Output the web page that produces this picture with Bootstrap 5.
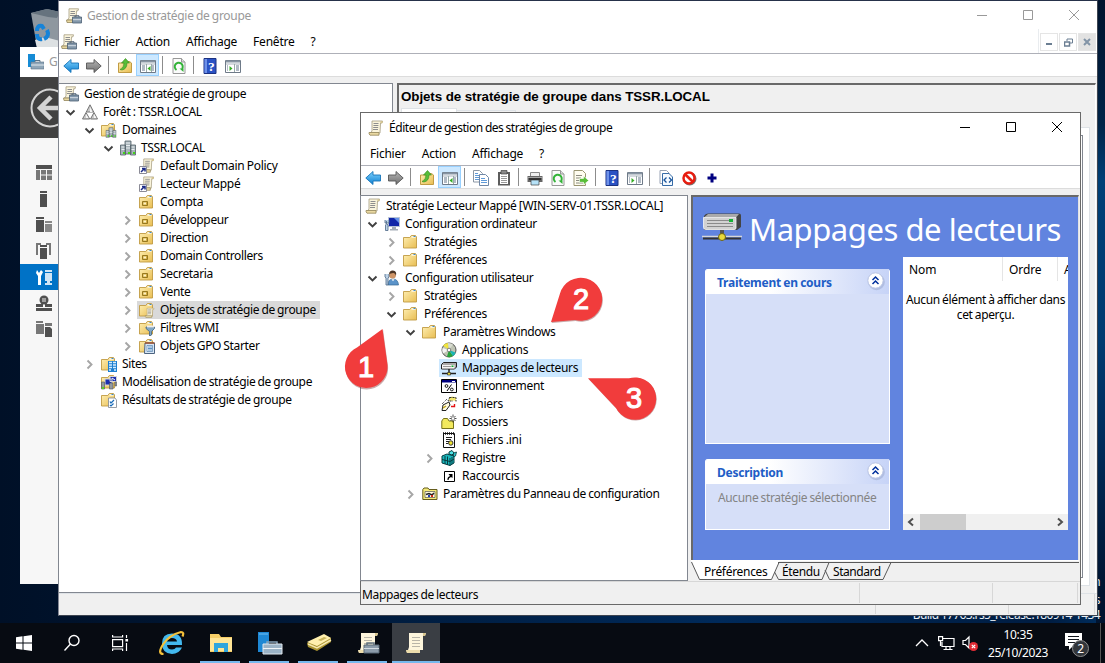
<!DOCTYPE html>
<html lang="fr">
<head>
<meta charset="utf-8">
<meta name="viewport" content="width=device-width, initial-scale=1">
<title>Éditeur de gestion des stratégies de groupe</title>
<link href="https://cdn.jsdelivr.net/npm/bootstrap@5.3.0/dist/css/bootstrap.min.css" rel="stylesheet">
<style>
html,body{height:100%}
body{font:12px/18px "Noto Sans","Open Sans",sans-serif;letter-spacing:-.36px;word-spacing:-.5px;color:#000;background:#001631}
svg{display:block;flex:none}
.desktop{width:1105px;height:663px;background:linear-gradient(90deg,#001027 0,#001a3a 30%,#002a5a 65%,#001d42 95%,#002f60)}
.edge-glow{right:0;top:0;width:9px;height:623px;background:linear-gradient(#00132d,#002448 20%,#004077 29%,#003a70 55%,#002c5c 70%,#001430 95%)}
.win{position:absolute;background:#fff;border:1px solid #696969;display:flex;flex-direction:column}
.w-server{left:20px;top:47px;width:39px;height:537px;border:0;background:#f7f7f7;overflow:hidden}
.w-gpm{left:58px;top:0;width:1040px;height:616px;border-color:#26324a #3d4450 #3d4450 #858894}
.w-gpe{left:360px;top:112px;width:721px;height:493px}
.titlebar{height:28px;padding-top:2px}
.w-gpm .titlebar{color:#999}
.caps{gap:34px;padding-bottom:2px}
.menubar{gap:16px;height:25px;border-bottom:1px solid #aeb0b8;letter-spacing:-.22px}
.menubar>span{padding-top:2px}
.tools{height:23px;border-bottom:1px solid #dcdcdc}
.tb{width:23px;height:22px;display:flex;align-items:center;justify-content:center;padding-top:2px}
.tb.on{background:#cce8ff;border:1px solid #99d1ff}
.sp{width:8px;height:18px;background:linear-gradient(#8c8c8c,#8c8c8c) 3px 0/1px 100% no-repeat}
.face{background:#f0f0f0}
.tree{background:#fff;border:1px solid #828790;padding-top:1px}
.node{display:flex;align-items:center;height:18px;white-space:nowrap}
.l0{padding-left:2px}.l1{padding-left:5px}.l2{padding-left:24px}.l3{padding-left:43px}.l4{padding-left:62px}
.tw{width:12px;margin-right:4px;flex:none}
.pick{display:flex;align-items:center;height:18px;padding:0 4px 0 2px;gap:5px}
.pick.grey{background:#d9d9d9}.pick.blue{background:#cce8ff}
.mdi{width:18px;height:18px;border:1px solid #e5e5e5;display:flex;align-items:center;justify-content:center}
.gp-head{font:bold 13.4px/18px "Liberation Sans",Arial,sans-serif;letter-spacing:-.1px;word-spacing:0}
.blueview{background:#6184df;border:2px solid #696969;border-right:1px solid #e3e3e3;border-bottom:0}
.bigname{font:31px/40px "Noto Sans",sans-serif;color:#fff;white-space:nowrap;letter-spacing:-.45px;word-spacing:0;padding-top:3px}
.pn{background:#d6dff8;border:1px solid #fff;border-top:0;border-radius:3px 3px 0 0;overflow:hidden}
.pn-h{height:25px;margin:0 -1px;padding:0 4px 2px 12px;background:linear-gradient(90deg,#fff 35%,#c6d3f7);color:#215dc6;font-weight:700;letter-spacing:-.25px}
.pn-b{color:#848484;padding:5px 12px;white-space:nowrap}
.col-h{height:24px;line-height:25px;letter-spacing:-.1px}
.col-h>div{border-right:1px solid #e5e5e5;padding-left:6px;flex:none}
.hbar{height:16px;background:#f0f0f0}
.thumb{width:46px;height:16px;background:#cdcdcd;margin-left:2px}
.status i{border-right:1px solid #d7d7d7;height:20px;display:block}
.srv-ico{height:26px;display:flex;align-items:center;padding-left:16px}
.taskbar{left:0;top:623px;width:1105px;height:40px;background:#070b12;color:#fff}
.tk{width:49px;height:40px;display:flex;align-items:center;justify-content:center;position:relative}
.tk.run::after{content:"";position:absolute;left:4px;right:5px;bottom:0;height:2px;background:#76b9ed}
.tk.act{background:#3a3e44;width:48px}.tk.act::after{left:0;right:0}
.wm{right:5px;color:#e8eef5;white-space:nowrap;letter-spacing:-.6px}
.clock{line-height:18px;text-align:center;width:70px}
.callouts{left:0;top:0;pointer-events:none}
.callouts text{font:29px "Liberation Sans",sans-serif;fill:#fff;stroke:#fff;stroke-width:1.1;text-anchor:middle;letter-spacing:0}
</style>
<script src="https://cdn.jsdelivr.net/npm/bootstrap@5.3.0/dist/js/bootstrap.bundle.min.js"></script>
</head>
<body class="m-0 overflow-hidden">
<svg width="0" height="0" class="position-absolute">
<defs>
<linearGradient id="gf" x2="1" y2="1"><stop stop-color="#fff0b4"/><stop offset="1" stop-color="#e8bd52"/></linearGradient>
<linearGradient id="gb" x2="0" y2="1"><stop stop-color="#7fd3ff"/><stop offset="1" stop-color="#0d7fd0"/></linearGradient>
<linearGradient id="gg" x2="0" y2="1"><stop stop-color="#b5b5b5"/><stop offset="1" stop-color="#6f6f6f"/></linearGradient>
<symbol id="right" viewBox="0 0 12 18"><path d="M4.500 5.500l4 4-4 4" fill="none" stroke="#a6a6a6" stroke-width="1.900"/></symbol>
<symbol id="down" viewBox="0 0 12 18"><path d="M2.500 7.500l4 4 4-4" fill="none" stroke="#404040" stroke-width="1.900"/></symbol>
<symbol id="scroll" viewBox="0 0 16 16"><path d="M4 1h10.500l-.5 2h-1.500L12 13H2.500L4 11z" fill="#fbf5dc" stroke="#a59c80" stroke-width=".8"/><path d="M12.500 1.200h2v2h-2z" fill="#d5c48c"/><path d="M1 12.500h10v2.700H2Q.7 14 1 12.500z" fill="#ead9a2" stroke="#94865a" stroke-width=".8"/><path d="M5.500 3.500h5M5.400 5.500h5M5.200 7.500h5M5 9.500h5" stroke="#8e8e8e"/></symbol>
<symbol id="scrolltool" viewBox="0 0 16 16"><path d="M3 .8h9.500l-.5 2h-1.500L10 12H1.500L3 10z" fill="#fbf5dc" stroke="#a59c80" stroke-width=".8"/><path d="M.5 12h8v2.500h-7.500z" fill="#ead9a2" stroke="#94865a" stroke-width=".8"/><path d="M4.500 3.500H9M4.400 5.500H9M4 7.500h5" stroke="#8e8e8e"/><path d="M9 9V7.800h4V9" fill="none" stroke="#47586b"/><path d="M6.500 9h9v6h-9z" fill="#8498ab" stroke="#4d6073" stroke-width=".8"/><path d="M7 11.700h8" stroke="#d5dde5"/></symbol>
<symbol id="bigscroll" viewBox="0 0 24 24"><path d="M5 2h17l-1 3h-2v14H4l1-3z" fill="#fdf5dc"/><path d="M19 2h3l-1 3h-2z" fill="#d8c68e"/><path d="M2 19h14v3H3q-1-1-1-3z" fill="#ecdcab"/><path d="M8 6.500h8M8 9.500h8M8 12.500h8M8 15.500h8" stroke="#b9b5a8"/></symbol>
<symbol id="forest" viewBox="0 0 16 16"><path d="M8 .8L4.300 8h7.400zM4 8.500L.5 15h7.200zM12 8.500L8.500 15h7z" fill="#ccc" stroke="#747474"/><path d="M8 3v5h2.500zM4 10v4h2.500zM12 10v4h2.500z" fill="#f6f6f6"/></symbol>
<symbol id="folder" viewBox="1 0 16 16"><path d="M1.500 3.500h6.300l1.500-2h4.200l1 1.500v11h-13z" fill="url(#gf)" stroke="#c19b43" stroke-width=".9"/><path d="M9.500 3h4" stroke="#fff" stroke-width="1.200"/><path d="M11.500 2.500h2" stroke="#3a8bd2"/></symbol>
<symbol id="blocks" viewBox="0 0 16 16"><path d="M5 1h6v13H5zM.5 5h5v10h-5zM10.500 5h5v10h-5z" fill="#a8b4ba" stroke="#526067" stroke-width=".8"/><path d="M6 3h4M6 5.500h4M6 8h4M1.500 7h3M1.500 9.500h3M11.500 7h3M11.500 9.500h3" stroke="#e9eef0"/><path d="M3 12h2v2H3zM8 12h2v2H8zM13 12h2v2h-2z" fill="#43d318"/></symbol>
<symbol id="domains" viewBox="0 0 16 16"><use href="#folder" width="16" height="16"/><use href="#blocks" x="4.500" y="5" width="11" height="11"/></symbol>
<symbol id="link" viewBox="0 0 16 16"><use href="#scroll" x="1" width="15" height="15"/><path d="M.5 8.500h7v7h-7z" fill="#fff" stroke="#8b8b96"/><path d="M2 14l3-3M3 10.500h3v3" stroke="#1b2a86" stroke-width="1.500" fill="none"/></symbol>
<symbol id="ou" viewBox="0 0 16 16"><use href="#folder" width="16" height="16"/><path d="M3.500 7.500h5v4h-5z" fill="#d6ae43" stroke="#96781f"/><path d="M4.500 8.500h2.500v2H4.500z" fill="#fdf3c5"/></symbol>
<symbol id="fscroll" viewBox="0 0 16 16"><use href="#folder" width="16" height="16"/><use href="#scroll" x="5.500" y="5.500" width="10.500" height="10.500"/></symbol>
<symbol id="ffilter" viewBox="0 0 16 16"><use href="#folder" width="16" height="16"/><path d="M7 7h8.500v1.500L12.500 11.500V15l-2 1v-4.500L7 8.500z" fill="#7fa6c6" stroke="#41637f" stroke-width=".8"/><path d="M8 6.500h7" stroke="#eee" stroke-width="2"/></symbol>
<symbol id="fstart" viewBox="0 0 16 16"><use href="#folder" width="16" height="16"/><path d="M6 5h9.500v10.500H5.500z" fill="#d9e7f6" stroke="#4c6480"/><path d="M6 5h9.500" stroke="#a0522d" stroke-width="1.500"/><path d="M8 7.500h5.500v6H8z" fill="#fff" stroke="#527fae" stroke-width=".7"/><path d="M9 9h4M9 10.500h4M9 12h4" stroke="#3176b8" stroke-width=".8"/></symbol>
<symbol id="sites" viewBox="0 0 16 16"><use href="#folder" width="16" height="16"/><path d="M7 5h9v11H7z" fill="#1d7fd0"/><path d="M8 6.500h3M12 6.500h3M8 9h3M12 9h3M8 11.500h3M12 11.500h3M8 14h2M13 14h2" stroke="#d6eeff" stroke-width="1.500"/></symbol>
<symbol id="model" viewBox="0 0 16 16"><use href="#folder" width="16" height="16"/><path d="M4 5h7v6H4zM9 2.500h6.500v5H9z" fill="#1b2eb0" stroke="#d5d5d5"/><path d="M.5 8h3v7h-3zM8.500 9h3.500v6H8.500zM14 8h1.500v4H14z" fill="#9299a0" stroke="#4d535a" stroke-width=".6"/><path d="M1 13h2v2H1z" fill="#58d71d"/><path d="M11 4l3 2" stroke="#fff"/></symbol>
<symbol id="result" viewBox="0 0 16 16"><use href="#folder" width="16" height="16"/><path d="M7.500 6h6.500l1.500 2v7.500h-8z" fill="#fff" stroke="#7d8590" stroke-width=".8"/><path d="M9 9.500l1 1.500 3-3M9 13l1 1 2.500-2.500" fill="none" stroke="#196bb8" stroke-width="1.200"/></symbol>
<symbol id="back" viewBox="0 0 16 16"><path d="M.8 8L8 1.500V5h7.500v6H8v3.500z" fill="url(#gb)" stroke="#1774b8" stroke-width=".9"/></symbol>
<symbol id="fwd" viewBox="0 0 16 16"><path d="M15.200 8L8 1.500V5H.5v6H8v3.500z" fill="url(#gg)" stroke="#555" stroke-width=".9"/></symbol>
<symbol id="up" viewBox="0 0 16 16"><path d="M1.500 5h6l1-1.500h4L14.500 5v9.500h-13z" fill="url(#gf)" stroke="#c19b43"/><path d="M3 11.500Q7 10 7 5H4.500l4-4.500 4 4.500H10Q10 11 5 12z" fill="#58bd38" stroke="#34891d" stroke-width=".6"/></symbol>
<symbol id="pane" viewBox="0 0 16 16"><path d="M.5 2.500h15v12H.5z" fill="#fff" stroke="#6e7a88"/><path d="M1 3.500h14" stroke="#8794a2" stroke-width="2"/><path d="M1 6h14" stroke="#a9b3bd"/><path d="M2 8h3M2 10h3M2 12h3M12 8h2M12 10h2M12 12h2" stroke="#64778b"/><path d="M6.500 6v8M11.500 6v8" stroke="#9aa"/><path d="M10.500 8v5L7.500 10.500z" fill="#35ad24"/></symbol>
<symbol id="console" viewBox="0 0 16 16"><path d="M.5 2.500h15v12H.5z" fill="#fff" stroke="#6e7a88"/><path d="M1 3.500h14" stroke="#8794a2" stroke-width="2"/><path d="M1 6h14" stroke="#a9b3bd"/><path d="M11 8h3M11 10h3M11 12h3M2 8h1M2 10h1M2 12h1" stroke="#64778b"/><path d="M9.500 6v8" stroke="#9aa"/><path d="M4.500 8v5l3-2.500z" fill="#35ad24"/></symbol>
<symbol id="refresh" viewBox="0 0 16 16"><path d="M2 .5h8.500L14 4v11.500H2z" fill="#fbfbfb" stroke="#989898"/><path d="M10.500.5V4H14" fill="#ddd" stroke="#989898"/><path d="M5.500 12A4 4 0 1 1 11 11" fill="none" stroke="#33b338" stroke-width="2"/><path d="M8.500 10.500h4v3.500z" fill="#33b338"/></symbol>
<symbol id="help" viewBox="0 0 16 16"><path d="M2 .5h12v15H2z" fill="#2a52c4" stroke="#1b3181"/><path d="M2.500 1H5v14H2.500z" fill="#6e91e8"/><text x="9.300" y="13" font-size="13.500" font-weight="700" fill="#fff" text-anchor="middle" font-family="Liberation Serif,serif">?</text></symbol>
<symbol id="copy" viewBox="0 0 16 16"><path d="M.5.500h6l3 3v8.500h-9z" fill="#fff" stroke="#8b97a5"/><path d="M6.500 4.500h6l3 3v8h-9z" fill="#fff" stroke="#6f87a6"/><path d="M2 3.500h3M2 5.500h4M2 7.500h4M2 9.500h4M8 8.500h4M8 10.500h6M8 12.500h6" stroke="#5f9ad8"/></symbol>
<symbol id="clip" viewBox="0 0 16 16"><path d="M2 2h12v13.500H2z" fill="#5c5c5c"/><path d="M4 4h8v10H4z" fill="#fff"/><path d="M5 .5h6v3.500H5z" fill="#888" stroke="#444" stroke-width=".7"/><path d="M5 6.500h6M5 8.500h6M5 10.500h6M5 12.500h6" stroke="#999"/></symbol>
<symbol id="print" viewBox="0 0 16 16"><path d="M3.500 2.500h9v4h-9z" fill="#eee" stroke="#888"/><path d="M.5 6h15v6H.5z" fill="#666"/><path d="M1 7.500h14" stroke="#a4a4a4"/><path d="M4 10h8v5H4z" fill="#b6e2f8" stroke="#444" stroke-width=".7"/><path d="M2 9h12" stroke="#222" stroke-width="1.500"/></symbol>
<symbol id="export" viewBox="0 0 16 16"><path d="M1 .5h8.500L12.500 3.500v12H1z" fill="#fffdf0" stroke="#999470"/><path d="M3 5.500h6M3 8h5M3 10.500h4M3 13h7" stroke="#8b8b80"/><path d="M6.500 8.500h4V6l5.200 4.500-5.200 4.300v-2.500h-4z" fill="#58bd38" stroke="#fff" stroke-width=".6"/></symbol>
<symbol id="code" viewBox="0 0 16 16"><path d="M2 .5h6.500l3 3v10H2z" fill="#fff" stroke="#98a3b4"/><path d="M4.500 3.500h6.500l3.500 3.500v8.500h-10z" fill="#f4faff" stroke="#376ba6"/><path d="M8.500 7.500L6 10l2.500 2.500M11 7.500l2.500 2.500-2.500 2.500" fill="none" stroke="#17529a" stroke-width="1.300"/></symbol>
<symbol id="stop" viewBox="0 0 16 16"><circle cx="8.700" cy="8.700" r="5.800" fill="none" stroke="#777" stroke-width="2"/><circle cx="8" cy="8" r="5.500" fill="#fff" stroke="#e81d10" stroke-width="2.500"/><path d="M4.300 4.500l7.500 7.200" stroke="#e81d10" stroke-width="2.700"/></symbol>
<symbol id="plus" viewBox="0 0 16 16"><path d="M8 3.500v9M3.500 8h9" stroke="#000080" stroke-width="3"/></symbol>
<symbol id="pc" viewBox="0 0 16 16"><path d="M4.500 1.500h11v9h-11z" fill="#1126a8" stroke="#b7c2d5"/><path d="M10 2h5v5z" fill="#6492e9"/><path d="M8 11h4v2h2v1.500H6V13h2z" fill="#a5aeb8"/><path d="M2.500 5v3l-1 1v5.500h2.500V9l-1-1M1 4v3h4V4" fill="#bcd1e5" stroke="#4c6787" stroke-width=".8"/></symbol>
<symbol id="user" viewBox="0 0 16 16"><path d="M4 15q0-6 5-6t5.500 6z" fill="#5b93c9" stroke="#356894" stroke-width=".7"/><circle cx="8.500" cy="5" r="3.500" fill="#cf9567"/><path d="M5 4q.5-3.800 4-3.500 4 .5 3 5-1-3-3-2.500T5 4z" fill="#4b3526"/><path d="M7.500 9.200l1.500 2 1.500-2z" fill="#fff"/><path d="M1 4v3l1 1v7h2V8l1-1V4" fill="#bcd1e5" stroke="#4c6787" stroke-width=".8"/></symbol>
<symbol id="disc" viewBox="0 0 16 16"><circle cx="8" cy="8" r="7" fill="#bfc4b4" stroke="#555"/><path d="M8 8L2 3.500Q4 1 7 1z" fill="#f0e43e"/><path d="M8 8L7 1q3-.2 5 1.500z" fill="#d8dcd0"/><path d="M8 8l4 6q-3 2-6 .5z" fill="#28a23b"/><path d="M8 8l6.500 2.500q-.7 2.500-2.500 3.500z" fill="#19b5b5"/><path d="M8 8L1.500 6Q.8 9 2 11.500z" fill="#f4f4f4"/><circle cx="8" cy="8" r="1.800" fill="#fff" stroke="#555" stroke-width=".7"/></symbol>
<symbol id="drive" viewBox="0 0 40 28"><path d="M2 4q0-3 4-3.500h31q2 0 2 2V14l-4 3H2z" fill="#444"/><path d="M2 4.500L6 1h31l-3 3.500z" fill="#aaa"/><path d="M1.500 4.500H34V15q0 1.500-2 1.500H4q-2.500 0-2.500-2z" fill="#d2d2d2" stroke="#f7f7f7" stroke-width=".8"/><path d="M5 7.500h26M5 10.500h26M5 13.500h26" stroke="#8b8b8b"/><path d="M27 6h4v3h-4z" fill="#16b335"/><path d="M18 17h4v6h-4z" fill="#555"/><path d="M0 23.500h40" stroke="#d7d7d7" stroke-width="1.500"/><path d="M1 25.500h38" stroke="#333" stroke-width="2"/><circle cx="20" cy="24" r="3.500" fill="#e7d83a" stroke="#6b6212"/></symbol>
<symbol id="sdrive" viewBox="0 0 16 16"><path d="M.5 4.500l2-2h13v4.500l-2 2H.5z" fill="#aaa" stroke="#222"/><path d="M1 5h12.500v3.500H1z" fill="#f5f5f5"/><path d="M2 6.500h8" stroke="#999"/><path d="M10.500 5.500h2v1.500h-2z" fill="#12ad2d"/><path d="M8 9v4M1 13.500h14" stroke="#222" stroke-width="1.500"/><path d="M6.500 12.500h3V15h-3z" fill="#e9da35" stroke="#333" stroke-width=".7"/></symbol>
<symbol id="env" viewBox="0 0 16 16"><path d="M.5 1.500h15v13H.5z" fill="#fff" stroke="#000"/><path d="M1 2h14v2.500H1z" fill="#000080"/><path d="M11 3.500h3" stroke="#fff"/><path d="M10.500 6.500l-4.500 6.500" stroke="#000"/><circle cx="5.500" cy="8" r="1.400" fill="none" stroke="#000" stroke-width=".9"/><circle cx="10.800" cy="11.500" r="1.400" fill="none" stroke="#000" stroke-width=".9"/></symbol>
<symbol id="files" viewBox="0 0 16 16"><path d="M8 1.500l3-1 4 1v3.500l-2-.5-5 .5z" fill="#f1e66b"/><path d="M8.500 1.500h6.500v4M9 1l-2 4h5" fill="none" stroke="#333" stroke-dasharray="2 1"/><path d="M2 9l6-3 1 3-4 5.500H1z" fill="#fffce0" stroke="#222"/><path d="M1 8l5-5" stroke="#222" stroke-dasharray="1 1"/><path d="M2 12l3-2" stroke="#bea01a" stroke-width="1.500"/><path d="M10 10.500h3.500V8" fill="none" stroke="#e51212" stroke-width="1.400"/></symbol>
<symbol id="newdir" viewBox="0 0 16 16"><path d="M.8 7L2.500 4.500h4L8 7h4.500v7.500H.8z" fill="#f2e95d" stroke="#77731b"/><path d="M12 .5v8M8.500 4.500h7M9.500 2l5 5M14.500 2l-5 5" stroke="#222" stroke-width=".8"/><circle cx="12" cy="4.500" r="1.300" fill="#fff"/></symbol>
<symbol id="ini" viewBox="0 0 16 16"><path d="M2.500 1.500h11v14h-11z" fill="#fff" stroke="#111"/><path d="M2 1.500h12" stroke="#111" stroke-width="2.500" stroke-dasharray="1 1"/><path d="M5 5.500h6M5 7.500h5M5 9.500h3M5 11.500h2" stroke="#222"/><circle cx="9.800" cy="11" r="2.200" fill="#f2e532" stroke="#333"/></symbol>
<symbol id="reg" viewBox="0 0 16 16"><path d="M1 6l5-2 7 2v7l-4 2.500L1 13z" fill="#19b8bd" stroke="#063c40"/><path d="M1 9.500l8 2 4-2.500M4 6v8M6.500 6.500v8.500M9 8v7.500M11 7v7" stroke="#063c40" fill="none"/><path d="M8 2l3-1.500L13 3l-2 2-3-1z" fill="#4fe3e6" stroke="#063c40"/><path d="M12.500 3l3-1-1 4-2 1z" fill="#2ac4c9" stroke="#063c40" stroke-width=".8"/></symbol>
<symbol id="short" viewBox="0 0 16 16"><path d="M3.500 3.500h10v10h-10z" fill="#fff" stroke="#000"/><path d="M6.500 12Q6 9 9 8L7.500 6h4v4L10 9Q7.500 10 7.500 12z" fill="#000"/></symbol>
<symbol id="panel" viewBox="0 0 16 16"><path d="M.8 13.500v-10l1.200-1.500h4l1 1.500h8v10z" fill="#f6eb78" stroke="#655c1d"/><path d="M3 5.500h10v6H3z" fill="#fffbe0" stroke="#555" stroke-width=".7"/><path d="M4 8.500l3-1 3 1.500 2-2" stroke="#222" fill="none" stroke-width="1.500"/><path d="M6 9h2v2H6z" fill="#2641b5"/><path d="M9 9h2v2H9z" fill="#d42b19"/></symbol>
<symbol id="chev2" viewBox="0 0 20 20"><circle cx="10.500" cy="11" r="8.300" fill="#9ba9cf" opacity=".55"/><circle cx="9.500" cy="9.500" r="7.700" fill="#fff" stroke="#b8c3e3"/><path d="M6.500 9l3-3 3 3M6.500 13l3-3 3 3" fill="none" stroke="#00309c" stroke-width="1.500"/></symbol>
</defs>
</svg>

<main class="desktop position-relative overflow-hidden">
  <div class="edge-glow position-absolute"></div>
  <svg class="position-absolute" style="left:30px;top:8px" width="30" height="40"><path d="M1 5L17 1l13 3v35H7z" fill="#8e979f"/><path d="M1 5L17 1l13 3-3 6-9-1z" fill="#66737e"/><path d="M5 32l10-3 15 4v7H7z" fill="#dde1e3"/><path d="M7 23q0-6 5-5l2 3M17 22q3 6-3 9M12 31q-5 1-5-5" fill="none" stroke="#1683d8" stroke-width="4"/></svg>
  <div class="wm position-absolute" style="top:573px">n</div>
  <div class="wm position-absolute" style="top:591px">s</div>
  <div class="wm position-absolute" style="top:606px">Build 17763.rs5_release.180914-1434</div>

  <section class="win w-server">
    <div class="bg-white d-flex align-items-center ps-2" style="height:30px;color:#999;gap:5px">
      <svg width="16" height="16"><path d="M0 0h7v13H0z" fill="#168bd5"/><path d="M7 8V6.500h5V8" stroke="#5b7488" fill="none"/><path d="M3 8h13v7H3z" fill="#8fa6b8" stroke="#5b7488" stroke-width=".6"/><path d="M3 11h13" stroke="#e3ebf0"/></svg><span>G</span></div>
    <div style="height:61px;background:#414141"><svg width="38" height="61"><circle cx="30" cy="31" r="18.500" fill="none" stroke="#d4d4d4" stroke-width="2"/><path d="M38 31H20M31 20L20 31l11 11" fill="none" stroke="#d4d4d4" stroke-width="4.500"/></svg></div>
    <div style="height:22px"></div>
    <div class="srv-ico"><svg width="16" height="16" fill="#777"><path d="M0 0h16v4H0z" fill="#505050"/><path d="M0 5h4v10H0zM5 5h5v4.500H5zM11 5h5v4.500h-5zM5 10.500h5V15H5zM11 10.500h5V15h-5z"/></svg></div>
    <div class="srv-ico"><svg width="16" height="16" fill="#505050"><path d="M4 0h7v2H4zM4 3h7v13H4z"/></svg></div>
    <div class="srv-ico"><svg width="16" height="16" fill="#505050"><path d="M0 0h8v2H0zM0 3h8v12H0z"/><path d="M9 4h7v2H9zM9 7h7v8H9z" fill="#888"/></svg></div>
    <div class="srv-ico"><svg width="16" height="16" fill="#505050"><path d="M0 0h5v2H2v10H0zM10 0h5v12h-2V2h-3z" fill="#777"/><path d="M4 2h7v2H4zM4 5h7v11H4z"/></svg></div>
    <div class="srv-ico" style="background:#0072c6"><svg width="16" height="16" fill="#fff"><path d="M1 1l2 3 2-3 2 2-2 4v9H2V7L0 4z"/><path d="M9 1h7v2H9zM9 4h7v8H9zM11 12h3v2h2v2H9v-2h2z" opacity=".82"/></svg></div>
    <div class="srv-ico"><svg width="16" height="16" fill="#505050"><circle cx="8" cy="5" r="4.500"/><path d="M6 4h4M6 6h4" stroke="#eee"/><path d="M0 9h7v3H0zM9 9h7v3H9zM0 13h16v3H0z"/></svg></div>
    <div class="srv-ico"><svg width="16" height="16" fill="#777"><path d="M0 0h7v2H0zM0 3h8v10H0zM9 2h7v3H9z"/><path d="M9 6h5l2 2v8H9z" fill="#505050"/></svg></div>
  </section>

  <section class="win w-gpm">
    <header class="titlebar d-flex align-items-center" style="padding-left:7px"><svg width="16" height="16"><use href="#scrolltool"/></svg><span style="margin-left:5px;letter-spacing:-.3px">Gestion de stratégie de groupe</span>
      <div class="caps d-flex ms-auto" style="margin-right:17px"><svg width="12" height="12" stroke="#999"><path d="M1 6.500h10"/></svg><svg width="12" height="12" stroke="#999" fill="none"><path d="M1.500 1.500h9v9h-9z"/></svg><svg width="12" height="12" stroke="#999"><path d="M1 1l10 10M11 1L1 11"/></svg></div></header>
    <nav class="menubar d-flex align-items-center" style="padding-left:2px"><span class="d-flex align-items-center"><svg width="16" height="16"><use href="#scrolltool"/></svg><span style="margin-left:7px">Fichier</span></span><span>Action</span><span>Affichage</span><span>Fenêtre</span><span>?</span>
      <div class="d-flex ms-auto h-100 align-items-center border-start border-secondary-subtle" style="gap:1px;padding:2px 1px 0"><span class="mdi"><svg width="8" height="8"><path d="M1 6h6" stroke="#6b7e92" stroke-width="2"/></svg></span><span class="mdi"><svg width="9" height="9" fill="none" stroke="#6b7e92"><path d="M3 3V1h5.500v4H6"/><path d="M.5 4h5v4h-5z" stroke-width="1.500"/></svg></span><span class="mdi" style="background:#e2e2e2"><svg width="8" height="8"><path d="M1 1l6 6M7 1L1 7" stroke="#8294a7" stroke-width="2"/></svg></span></div></nav>
    <div class="tools d-flex align-items-center"><span class="tb"><svg width="16" height="16"><use href="#back"/></svg></span><span class="tb"><svg width="16" height="16"><use href="#fwd"/></svg></span><span class="sp"></span><span class="tb"><svg width="16" height="16"><use href="#up"/></svg></span><span class="tb on"><svg width="16" height="16"><use href="#pane"/></svg></span><span class="sp"></span><span class="tb"><svg width="16" height="16"><use href="#refresh"/></svg></span><span class="sp"></span><span class="tb"><svg width="16" height="16"><use href="#help"/></svg></span><span class="tb"><svg width="16" height="16"><use href="#console"/></svg></span></div>
    <div class="face d-flex flex-grow-1" style="padding:6px 1px 0 0">
      <div class="tree" style="width:335px;height:510px;margin-left:-1px">
        <div class="node l0"><span class="pick"><svg width="16" height="16"><use href="#scrolltool"/></svg>Gestion de stratégie de groupe</span></div>
        <div class="node l1"><svg class="tw" height="18"><use href="#down"/></svg><span class="pick"><svg width="16" height="16"><use href="#forest"/></svg>Forêt : TSSR.LOCAL</span></div>
        <div class="node l2"><svg class="tw" height="18"><use href="#down"/></svg><span class="pick"><svg width="16" height="16"><use href="#domains"/></svg>Domaines</span></div>
        <div class="node l3"><svg class="tw" height="18"><use href="#down"/></svg><span class="pick"><svg width="16" height="16"><use href="#blocks"/></svg>TSSR.LOCAL</span></div>
        <div class="node l4"><span class="tw"></span><span class="pick" style="letter-spacing:-.28px"><svg width="16" height="16"><use href="#link"/></svg>Default Domain Policy</span></div>
        <div class="node l4"><span class="tw"></span><span class="pick" style="letter-spacing:-.28px"><svg width="16" height="16"><use href="#link"/></svg>Lecteur Mappé</span></div>
        <div class="node l4"><span class="tw"></span><span class="pick" style="letter-spacing:-.22px"><svg width="16" height="16"><use href="#ou"/></svg>Compta</span></div>
        <div class="node l4"><svg class="tw" height="18"><use href="#right"/></svg><span class="pick"><svg width="16" height="16"><use href="#ou"/></svg>Développeur</span></div>
        <div class="node l4"><svg class="tw" height="18"><use href="#right"/></svg><span class="pick"><svg width="16" height="16"><use href="#ou"/></svg>Direction</span></div>
        <div class="node l4"><svg class="tw" height="18"><use href="#right"/></svg><span class="pick"><svg width="16" height="16"><use href="#ou"/></svg>Domain Controllers</span></div>
        <div class="node l4"><svg class="tw" height="18"><use href="#right"/></svg><span class="pick"><svg width="16" height="16"><use href="#ou"/></svg>Secretaria</span></div>
        <div class="node l4"><svg class="tw" height="18"><use href="#right"/></svg><span class="pick"><svg width="16" height="16"><use href="#ou"/></svg>Vente</span></div>
        <div class="node l4"><svg class="tw" height="18"><use href="#right"/></svg><span class="pick grey"><svg width="16" height="16"><use href="#fscroll"/></svg>Objets de stratégie de groupe</span></div>
        <div class="node l4"><svg class="tw" height="18"><use href="#right"/></svg><span class="pick"><svg width="16" height="16"><use href="#ffilter"/></svg>Filtres WMI</span></div>
        <div class="node l4"><svg class="tw" height="18"><use href="#right"/></svg><span class="pick"><svg width="16" height="16"><use href="#fstart"/></svg>Objets GPO Starter</span></div>
        <div class="node l2"><svg class="tw" height="18"><use href="#right"/></svg><span class="pick"><svg width="16" height="16"><use href="#sites"/></svg>Sites</span></div>
        <div class="node l2"><span class="tw"></span><span class="pick"><svg width="16" height="16"><use href="#model"/></svg>Modélisation de stratégie de groupe</span></div>
        <div class="node l2"><span class="tw"></span><span class="pick"><svg width="16" height="16"><use href="#result"/></svg>Résultats de stratégie de groupe</span></div>
      </div>
      <div class="flex-grow-1" style="margin-left:4px;height:510px;border:2px solid #696969;border-width:2px 1px 0 2px;border-right-color:#fff;padding:3px 5px 0 2px">
        <div class="gp-head">Objets de stratégie de groupe dans TSSR.LOCAL</div>
        <div class="d-flex" style="height:19px;margin-top:2px"><div class="bg-white border border-bottom-0" style="width:56px"></div><div class="border border-start-0 border-bottom-0" style="width:59px;margin-top:2px"></div></div>
        <div class="bg-white border" style="height:459px;padding:7px 6px 7px 2px"><div class="h-100" style="border:1px solid #828790"></div></div>
      </div>
    </div>
    <footer class="status face d-flex justify-content-end border-top" style="height:22px"><i></i><i style="width:133px"></i><i style="width:86px;margin-right:2px"></i></footer>
  </section>

  <section class="win w-gpe">
    <header class="titlebar d-flex align-items-center" style="padding-left:7px"><svg width="16" height="16"><use href="#scroll"/></svg><span style="margin-left:5px;letter-spacing:-.46px">Éditeur de gestion des stratégies de groupe</span>
      <div class="caps d-flex ms-auto" style="margin-right:17px"><svg width="12" height="12" stroke="#000"><path d="M1 6.500h10"/></svg><svg width="12" height="12" stroke="#000" fill="none"><path d="M1.500 1.500h9v9h-9z"/></svg><svg width="12" height="12" stroke="#000"><path d="M1 1l10 10M11 1L1 11"/></svg></div></header>
    <nav class="menubar d-flex align-items-center" style="padding-left:9px"><span>Fichier</span><span>Action</span><span>Affichage</span><span>?</span></nav>
    <div class="tools d-flex align-items-center"><span class="tb"><svg width="16" height="16"><use href="#back"/></svg></span><span class="tb"><svg width="16" height="16"><use href="#fwd"/></svg></span><span class="sp"></span><span class="tb"><svg width="16" height="16"><use href="#up"/></svg></span><span class="tb on"><svg width="16" height="16"><use href="#pane"/></svg></span><span class="sp"></span><span class="tb"><svg width="16" height="16"><use href="#copy"/></svg></span><span class="tb"><svg width="16" height="16"><use href="#clip"/></svg></span><span class="sp"></span><span class="tb"><svg width="16" height="16"><use href="#print"/></svg></span><span class="tb"><svg width="16" height="16"><use href="#refresh"/></svg></span><span class="tb"><svg width="16" height="16"><use href="#export"/></svg></span><span class="sp"></span><span class="tb"><svg width="16" height="16"><use href="#help"/></svg></span><span class="tb"><svg width="16" height="16"><use href="#console"/></svg></span><span class="sp"></span><span class="tb"><svg width="16" height="16"><use href="#code"/></svg></span><span class="tb"><svg width="16" height="16"><use href="#stop"/></svg></span><span class="tb"><svg width="16" height="16"><use href="#plus"/></svg></span></div>
    <div class="face d-flex" style="height:392px;padding-top:6px">
      <div class="tree" style="width:328px;margin-left:-1px;height:386px">
        <div class="node l0"><span class="pick" style="letter-spacing:-.3px"><svg width="16" height="16"><use href="#scroll"/></svg>Stratégie Lecteur Mappé [WIN-SERV-01.TSSR.LOCAL]</span></div>
        <div class="node l1"><svg class="tw" height="18"><use href="#down"/></svg><span class="pick"><svg width="16" height="16"><use href="#pc"/></svg>Configuration ordinateur</span></div>
        <div class="node l2"><svg class="tw" height="18"><use href="#right"/></svg><span class="pick"><svg width="16" height="16"><use href="#folder"/></svg>Stratégies</span></div>
        <div class="node l2"><svg class="tw" height="18"><use href="#right"/></svg><span class="pick"><svg width="16" height="16"><use href="#folder"/></svg>Préférences</span></div>
        <div class="node l1"><svg class="tw" height="18"><use href="#down"/></svg><span class="pick"><svg width="16" height="16"><use href="#user"/></svg>Configuration utilisateur</span></div>
        <div class="node l2"><svg class="tw" height="18"><use href="#right"/></svg><span class="pick"><svg width="16" height="16"><use href="#folder"/></svg>Stratégies</span></div>
        <div class="node l2"><svg class="tw" height="18"><use href="#down"/></svg><span class="pick"><svg width="16" height="16"><use href="#folder"/></svg>Préférences</span></div>
        <div class="node l3"><svg class="tw" height="18"><use href="#down"/></svg><span class="pick"><svg width="16" height="16"><use href="#folder"/></svg>Paramètres Windows</span></div>
        <div class="node l4"><span class="tw"></span><span class="pick" style="letter-spacing:-.22px"><svg width="16" height="16"><use href="#disc"/></svg>Applications</span></div>
        <div class="node l4"><span class="tw"></span><span class="pick blue"><svg width="16" height="16"><use href="#sdrive"/></svg>Mappages de lecteurs</span></div>
        <div class="node l4"><span class="tw"></span><span class="pick"><svg width="16" height="16"><use href="#env"/></svg>Environnement</span></div>
        <div class="node l4"><span class="tw"></span><span class="pick" style="letter-spacing:-.25px"><svg width="16" height="16"><use href="#files"/></svg>Fichiers</span></div>
        <div class="node l4"><span class="tw"></span><span class="pick" style="letter-spacing:-.25px"><svg width="16" height="16"><use href="#newdir"/></svg>Dossiers</span></div>
        <div class="node l4"><span class="tw"></span><span class="pick" style="letter-spacing:-.22px"><svg width="16" height="16"><use href="#ini"/></svg>Fichiers .ini</span></div>
        <div class="node l4"><svg class="tw" height="18"><use href="#right"/></svg><span class="pick"><svg width="16" height="16"><use href="#reg"/></svg>Registre</span></div>
        <div class="node l4"><span class="tw"></span><span class="pick" style="letter-spacing:-.25px"><svg width="16" height="16"><use href="#short"/></svg>Raccourcis</span></div>
        <div class="node l3"><svg class="tw" height="18"><use href="#right"/></svg><span class="pick"><svg width="16" height="16"><use href="#panel"/></svg>Paramètres du Panneau de configuration</span></div>
      </div>
      <div class="d-flex flex-column" style="width:388px;margin-left:3px">
        <div class="blueview" style="height:365px">
          <div class="d-flex align-items-center" style="height:60px;padding-left:9px;gap:7px"><svg width="40" height="28"><use href="#drive"/></svg><span class="bigname">Mappages de lecteurs</span></div>
          <div class="d-flex" style="padding-left:12px;gap:13px">
            <div class="d-flex flex-column" style="width:185px;gap:15px;padding-top:12px">
              <div class="pn" style="height:175px"><div class="pn-h d-flex align-items-center"><span style="padding-top:5px">Traitement en cours</span><svg class="ms-auto" width="20" height="20"><use href="#chev2"/></svg></div></div>
              <div class="pn" style="height:71px"><div class="pn-h d-flex align-items-center"><span style="padding-top:5px">Description</span><svg class="ms-auto" width="20" height="20"><use href="#chev2"/></svg></div><div class="pn-b">Aucune stratégie sélectionnée</div></div>
            </div>
            <div class="bg-white d-flex flex-column overflow-hidden" style="width:165px;height:273px">
              <div class="col-h d-flex"><div style="width:100px">Nom</div><div style="width:55px">Ordre</div><div class="border-0">A</div></div>
              <div class="text-center text-nowrap" style="line-height:15px;padding-top:11px">Aucun élément à afficher dans<br>cet aperçu.</div>
              <div class="hbar mt-auto d-flex align-items-center"><svg width="15" height="16"><path d="M10 4.500L6 8l4 3.500" fill="none" stroke="#505050" stroke-width="2"/></svg><div class="thumb"></div><svg class="ms-auto" width="16" height="16"><path d="M6 4.500L10 8l-4 3.500" fill="none" stroke="#505050" stroke-width="2"/></svg></div>
            </div>
          </div>
        </div>
        <div class="position-relative flex-grow-1">
          <svg width="389" height="21" class="position-absolute top-0 start-0"><path d="M0 .5h388" stroke="#fff"/><path d="M0 0L8 19.500h73L88 2V0z" fill="#fff"/><path d="M87 2.500h301M.500 2L8.500 19.500h72L88 2.500M83.500 12l4 7.500H131L138 2.500M134 10l4.500 9.500H192L200 2.500" fill="none" stroke="#595959"/></svg>
          <div class="position-relative d-flex text-nowrap" style="padding:3px 0 0 13px;gap:16px"><span style="letter-spacing:-.3px;width:62px">Préférences</span><span style="width:37px">Étendu</span><span style="margin-left:-2px;letter-spacing:-.45px">Standard</span></div>
        </div>
      </div>
    </div>
    <footer class="status face d-flex flex-grow-1 align-items-center" style="border-top:1px solid #d7d7d7;padding:0 2px 0 1px"><span style="padding-top:3px">Mappages de lecteurs</span><i class="ms-auto"></i><i style="width:133px"></i><i style="width:85px"></i></footer>
  </section>

  <svg class="callouts position-absolute" width="1105" height="663"><g id="pins" fill="#7a2a2a" opacity=".4" transform="translate(.6 1)"><path d="M382.500 329L387.500 366A21.300 21.300 0 1 1 357 348Z"/><path d="M551 322L560 293.500A21.500 21.500 0 1 1 575 320Z"/><path d="M588 378H629A21.200 21.200 0 1 1 616 408Z"/></g><g fill="#f13c3c"><path d="M382.500 329L387.500 365A21.300 21.300 0 1 1 357 347.500Z"/><path d="M551 322L560 293.500A21.500 21.500 0 1 1 575 320Z"/><path d="M588 378.300H629A21.200 21.200 0 1 1 616 408Z"/></g><text x="366" y="377">1</text><text x="581" y="308.500">2</text><text x="634" y="408">3</text></svg>

  <footer class="taskbar position-absolute d-flex">
    <span class="tk" style="width:48px"><svg width="16" height="16" fill="#fff"><path d="M0 2.300L6.500 1.300v6.200H0zM7.500 1.200L16 0v7.500H7.500zM0 8.500h6.500v6.200L0 13.700zM7.500 8.500H16V16l-8.500-1.200z"/></svg></span>
    <span class="tk" style="width:48px"><svg width="18" height="18" fill="none" stroke="#fff" stroke-width="1.400"><circle cx="11" cy="6.500" r="5"/><path d="M7.500 10L1.500 16.500"/></svg></span>
    <span class="tk" style="width:48px"><svg width="17" height="16" fill="none" stroke="#fff" stroke-width="1.200"><path d="M.6 4.600h10v7H.6zM.6 0v2h10V0M.6 16v-2h10v2M14.500 0v3M14.500 8v8"/><path d="M14 4.500h1.500v1.500H14z" fill="#fff"/></svg></span>
    <span class="tk" style="margin-left:3px"><svg width="26" height="26"><path d="M23 15H8q.5 4.500 5 4.500 3 0 4-2h6Q20 24 13 24 3 23.500 3 13.500T13 3.500Q23.500 3.500 23 15M8 11.500h10Q17.500 8 13 8t-5 3.500" fill="#43b9ee" fill-rule="evenodd"/><path d="M4.500 24Q-2 24 4 14.500T22 2q3.500 0 1.500 4.500" fill="none" stroke="#f4c13a" stroke-width="2.200"/></svg></span>
    <span class="tk run"><svg width="24" height="24"><path d="M1 3h9l2 3h11v15H1z" fill="#f7cf67"/><path d="M1 7h22v13H1z" fill="#ffe596"/><path d="M5 21v-9h14v9h-4v-4H9v4z" fill="#2fa5dd"/></svg></span>
    <span class="tk run"><svg width="26" height="24"><path d="M1 1h11v20H1z" fill="#1e88d4"/><path d="M2 3h9" stroke="#72bff2"/><path d="M10 13v-2h10v2" fill="none" stroke="#86a2b8" stroke-width="1.500"/><path d="M6 13h19v10H6z" fill="#9bb3c6" stroke="#e1e9ef"/><path d="M6 17.500h19" stroke="#f0f4f7"/></svg></span>
    <span class="tk run"><svg width="26" height="20"><path d="M1 10L18 2l7 3v4L11 18 2 14z" fill="#aa9430"/><path d="M1 9L18 1l7 4-14 8z" fill="#fff0ae"/><path d="M2 11l9 4 14-8" fill="none" stroke="#f7e9b0" stroke-width="1.500"/><path d="M12 7l6-3 3 1-6 3z" fill="#c9b45b"/></svg></span>
    <span class="tk run"><svg width="24" height="24"><use href="#bigscroll"/><path d="M11 14v-2h7v2" fill="none" stroke="#5f707f" stroke-width="1.500"/><path d="M8 14h15v8H8z" fill="#8c9cab" stroke="#5b6b79"/><path d="M8 17.500h15" stroke="#d3dbe2"/></svg></span>
    <span class="tk run act"><svg width="24" height="24"><use href="#bigscroll"/></svg></span>
    <div class="ms-auto d-flex align-items-center">
      <svg width="14" height="10" style="margin-right:9px" fill="none" stroke="#fff" stroke-width="1.300"><path d="M1 8l6-6 6 6"/></svg>
      <svg width="17" height="16" style="margin-right:7px" fill="none" stroke="#fff" stroke-width="1.200"><path d="M5 3.500h11v8H4V7M8 12v3M12 12v3M5.500 14.500h9M.6 1.600h4v4h-4zM2.500 6v5"/></svg>
      <svg width="17" height="16" style="margin-right:4px"><path d="M1 5.500h2.500L7 2v11L3.500 9.500H1z" fill="none" stroke="#fff" stroke-width="1.200"/><circle cx="11.500" cy="11.500" r="4.500" fill="#e12c35"/><path d="M9.800 9.800l3.400 3.400M13.200 9.800l-3.400 3.400" stroke="#fff" stroke-width="1.200"/></svg>
      <div class="clock" style="padding-top:1px">10:35<br>25/10/2023</div>
      <svg width="26" height="26" style="margin:4px 0 0 11px"><path d="M1 1h17v13H9l-4 4v-4H1z" fill="#fff"/><path d="M4 4.500h11M4 7.500h11M4 10.500h7" stroke="#10151c"/><circle cx="16.500" cy="16.500" r="8" fill="#32363b" stroke="#8d8d8d"/><text x="16.500" y="21" fill="#fff" font-size="12" text-anchor="middle">2</text></svg>
      <span style="width:1px;height:40px;background:#555;margin:0 4px 0 10px"></span>
    </div>
  </footer>
</main>
</body>
</html>
